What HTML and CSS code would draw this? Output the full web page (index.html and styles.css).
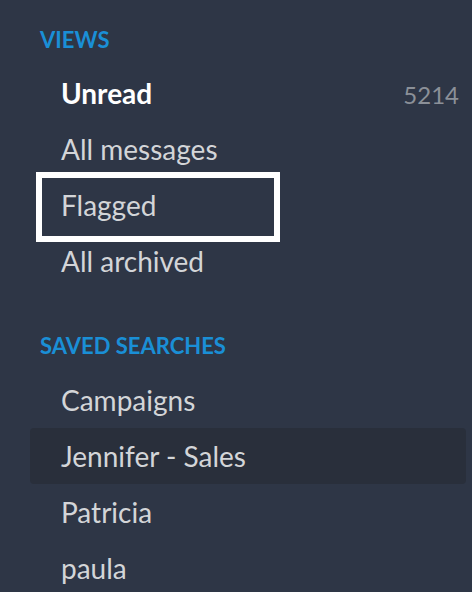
FILE: index.html
```html
<!DOCTYPE html>
<html lang="en">
<head>
<meta charset="utf-8">
<title>Sidebar</title>
<link rel="stylesheet" href="styles.css">
</head>
<body>
<nav class="sidebar">
  <section class="group">
    <h2 class="group-title">VIEWS</h2>
    <ul class="list">
      <li class="item item-unread"><span class="label">Unread</span><span class="count">5214</span></li>
      <li class="item"><span class="label">All messages</span></li>
      <li class="item item-focus"><span class="label">Flagged</span></li>
      <li class="item"><span class="label">All archived</span></li>
    </ul>
  </section>
  <section class="group group-saved">
    <h2 class="group-title">SAVED SEARCHES</h2>
    <ul class="list">
      <li class="item"><span class="label">Campaigns</span></li>
      <li class="item item-hover"><span class="label">Jennifer - Sales</span></li>
      <li class="item"><span class="label">Patricia</span></li>
      <li class="item"><span class="label">paula</span></li>
    </ul>
  </section>
</nav>
</body>
</html>
```
FILE: styles.css
```css
html, body {
  margin: 0;
  padding: 0;
  height: 100%;
  background: #2e3646;
  overflow: hidden;
}
.sidebar {
  font-family: Lato, "Open Sans", sans-serif;
  padding: 0 6px 0 30px;
}
.group-title {
  margin: 29px 0 14px 10px;
  font-size: 22px;
  line-height: 22px;
  font-weight: 700;
  color: #1a8fd6;
}
.group-saved .group-title {
  margin-top: 46px;
  margin-bottom: 15px;
}
.list {
  list-style: none;
  margin: 0;
  padding: 0;
}
.item {
  position: relative;
  display: flex;
  align-items: baseline;
  justify-content: space-between;
  height: 56px;
  line-height: 56px;
  padding: 0 7px 0 31px;
  font-size: 28px;
  color: #d3d5d8;
  border-radius: 4px;
}
.item-unread .label {
  font-weight: 700;
  color: #ffffff;
}
.count {
  font-size: 24px;
  color: #8b9098;
}
.item-hover {
  background: #292f3b;
}
.item-focus::after {
  content: "";
  position: absolute;
  left: 6px;
  top: -5px;
  width: 232px;
  height: 58px;
  border: 6px solid #ffffff;
}
```
